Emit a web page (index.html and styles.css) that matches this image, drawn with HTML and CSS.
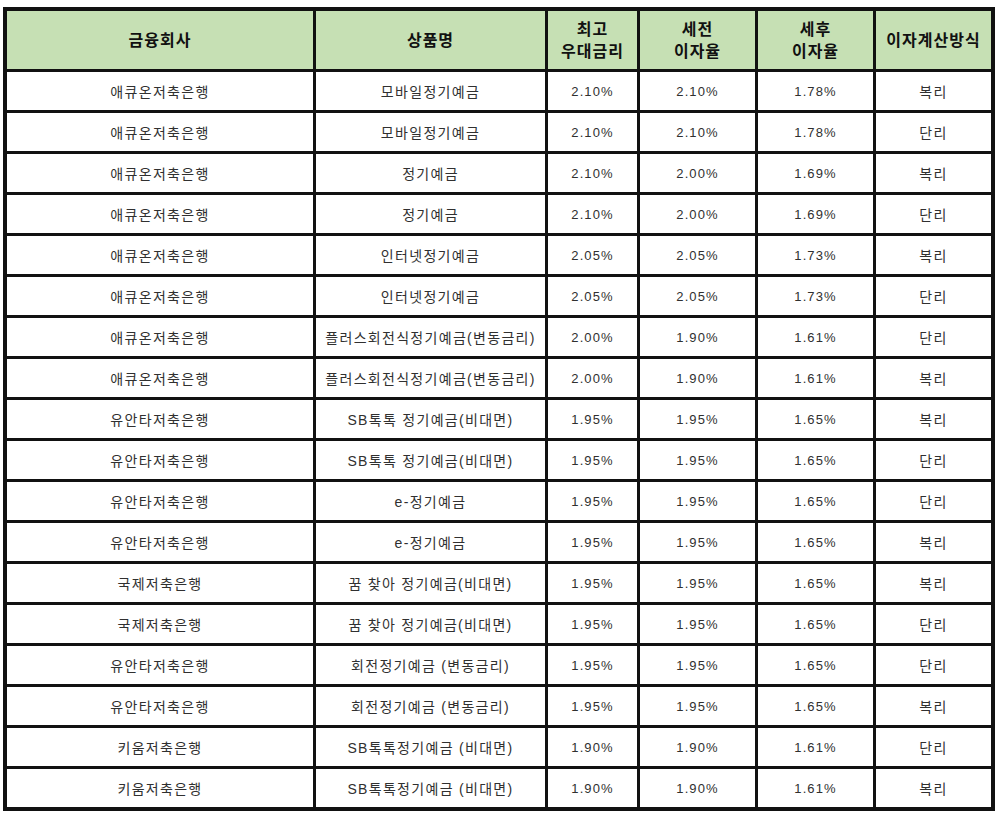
FILE: index.html
```html
<!DOCTYPE html>
<html lang="ko">
<head>
<meta charset="utf-8">
<title>정기예금 금리 비교</title>
<link rel="stylesheet" href="styles.css">
</head>
<body>
<div class="sheet">
  <div class="row head">
    <div class="cell">금융회사</div>
    <div class="cell">상품명</div>
    <div class="cell">최고<br>우대금리</div>
    <div class="cell">세전<br>이자율</div>
    <div class="cell">세후<br>이자율</div>
    <div class="cell">이자계산방식</div>
  </div>
  <div class="row"><div class="cell">애큐온저축은행</div><div class="cell">모바일정기예금</div><div class="cell num">2.10%</div><div class="cell num">2.10%</div><div class="cell num">1.78%</div><div class="cell">복리</div></div>
  <div class="row"><div class="cell">애큐온저축은행</div><div class="cell">모바일정기예금</div><div class="cell num">2.10%</div><div class="cell num">2.10%</div><div class="cell num">1.78%</div><div class="cell">단리</div></div>
  <div class="row"><div class="cell">애큐온저축은행</div><div class="cell">정기예금</div><div class="cell num">2.10%</div><div class="cell num">2.00%</div><div class="cell num">1.69%</div><div class="cell">복리</div></div>
  <div class="row"><div class="cell">애큐온저축은행</div><div class="cell">정기예금</div><div class="cell num">2.10%</div><div class="cell num">2.00%</div><div class="cell num">1.69%</div><div class="cell">단리</div></div>
  <div class="row"><div class="cell">애큐온저축은행</div><div class="cell">인터넷정기예금</div><div class="cell num">2.05%</div><div class="cell num">2.05%</div><div class="cell num">1.73%</div><div class="cell">복리</div></div>
  <div class="row"><div class="cell">애큐온저축은행</div><div class="cell">인터넷정기예금</div><div class="cell num">2.05%</div><div class="cell num">2.05%</div><div class="cell num">1.73%</div><div class="cell">단리</div></div>
  <div class="row"><div class="cell">애큐온저축은행</div><div class="cell">플러스회전식정기예금(변동금리)</div><div class="cell num">2.00%</div><div class="cell num">1.90%</div><div class="cell num">1.61%</div><div class="cell">단리</div></div>
  <div class="row"><div class="cell">애큐온저축은행</div><div class="cell">플러스회전식정기예금(변동금리)</div><div class="cell num">2.00%</div><div class="cell num">1.90%</div><div class="cell num">1.61%</div><div class="cell">복리</div></div>
  <div class="row"><div class="cell">유안타저축은행</div><div class="cell">SB톡톡 정기예금(비대면)</div><div class="cell num">1.95%</div><div class="cell num">1.95%</div><div class="cell num">1.65%</div><div class="cell">복리</div></div>
  <div class="row"><div class="cell">유안타저축은행</div><div class="cell">SB톡톡 정기예금(비대면)</div><div class="cell num">1.95%</div><div class="cell num">1.95%</div><div class="cell num">1.65%</div><div class="cell">단리</div></div>
  <div class="row"><div class="cell">유안타저축은행</div><div class="cell">e-정기예금</div><div class="cell num">1.95%</div><div class="cell num">1.95%</div><div class="cell num">1.65%</div><div class="cell">단리</div></div>
  <div class="row"><div class="cell">유안타저축은행</div><div class="cell">e-정기예금</div><div class="cell num">1.95%</div><div class="cell num">1.95%</div><div class="cell num">1.65%</div><div class="cell">복리</div></div>
  <div class="row"><div class="cell">국제저축은행</div><div class="cell">꿈 찾아 정기예금(비대면)</div><div class="cell num">1.95%</div><div class="cell num">1.95%</div><div class="cell num">1.65%</div><div class="cell">복리</div></div>
  <div class="row"><div class="cell">국제저축은행</div><div class="cell">꿈 찾아 정기예금(비대면)</div><div class="cell num">1.95%</div><div class="cell num">1.95%</div><div class="cell num">1.65%</div><div class="cell">단리</div></div>
  <div class="row"><div class="cell">유안타저축은행</div><div class="cell">회전정기예금 (변동금리)</div><div class="cell num">1.95%</div><div class="cell num">1.95%</div><div class="cell num">1.65%</div><div class="cell">단리</div></div>
  <div class="row"><div class="cell">유안타저축은행</div><div class="cell">회전정기예금 (변동금리)</div><div class="cell num">1.95%</div><div class="cell num">1.95%</div><div class="cell num">1.65%</div><div class="cell">복리</div></div>
  <div class="row"><div class="cell">키움저축은행</div><div class="cell">SB톡톡정기예금 (비대면)</div><div class="cell num">1.90%</div><div class="cell num">1.90%</div><div class="cell num">1.61%</div><div class="cell">단리</div></div>
  <div class="row"><div class="cell">키움저축은행</div><div class="cell">SB톡톡정기예금 (비대면)</div><div class="cell num">1.90%</div><div class="cell num">1.90%</div><div class="cell num">1.61%</div><div class="cell">복리</div></div>
</div>
</body>
</html>
```

FILE: styles.css
```css
html, body {
  margin: 0;
  padding: 0;
  background: #ffffff;
}

body {
  font-family: "Liberation Sans", "Noto Sans CJK KR", sans-serif;
}

.sheet {
  display: grid;
  grid-template-columns: 306px 229px 89px 115px 115px 115px;
  grid-template-rows: 58px repeat(18, 38px);
  gap: 3px;
  width: max-content;
  margin: 7px 0 0 3px;
  border: 4px solid #111111;
  background: #111111;
}

.row {
  display: contents;
}

.cell {
  display: flex;
  align-items: center;
  justify-content: center;
  text-align: center;
  background: #ffffff;
  color: #303030;
  font-size: 14px;
  letter-spacing: 1.3px;
  white-space: nowrap;
}

.num {
  font-size: 13px;
  letter-spacing: 1.1px;
}

.head .cell {
  background: #c6e0b4;
  color: #111111;
  font-weight: bold;
  font-size: 16px;
  letter-spacing: 1px;
  line-height: 22px;
  padding-top: 2px;
  box-sizing: border-box;
}
```
